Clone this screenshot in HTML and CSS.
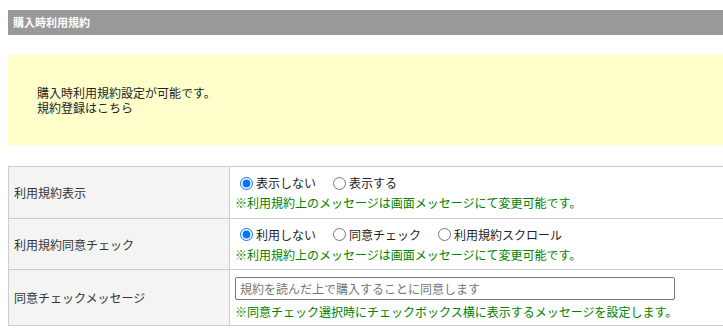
FILE: index.html
```html
<!DOCTYPE html>
<html lang="ja">
<head>
  <meta charset="UTF-8" />
  <title>購入時利用規約</title>
  <link rel="stylesheet" href="styles.css">
</head>
<body>
  <div class="page">
    <h2 class="section-title">購入時利用規約</h2>

    <div class="notice">
      <p>購入時利用規約設定が可能です。<br>規約登録はこちら</p>
    </div>

    <table class="form-table">
      <tr class="row-1">
        <th>利用規約表示</th>
        <td>
          <div class="choices">
            <label><input type="radio" name="disp" checked>表示しない</label>
            <label><input type="radio" name="disp">表示する</label>
          </div>
          <div class="note">※利用規約上のメッセージは画面メッセージにて変更可能です。</div>
        </td>
      </tr>
      <tr class="row-2">
        <th>利用規約同意チェック</th>
        <td>
          <div class="choices">
            <label><input type="radio" name="check" checked>利用しない</label>
            <label><input type="radio" name="check">同意チェック</label>
            <label><input type="radio" name="check">利用規約スクロール</label>
          </div>
          <div class="note">※利用規約上のメッセージは画面メッセージにて変更可能です。</div>
        </td>
      </tr>
      <tr class="row-3">
        <th>同意チェックメッセージ</th>
        <td>
          <input type="text" class="text-input" placeholder="規約を読んだ上で購入することに同意します">
          <div class="note">※同意チェック選択時にチェックボックス横に表示するメッセージを設定します。</div>
        </td>
      </tr>
    </table>
  </div>
</body>
</html>
```

FILE: styles.css
```css
html {
  overflow: hidden;
}
body {
  margin: 10px 0 0 8px;
  font-family: "Noto Sans CJK JP", "Noto Sans", sans-serif;
  font-size: 12px;
  color: #333;
}
.page {
  width: 780px;
}
.section-title {
  margin: 0;
  height: 25px;
  line-height: 25px;
  padding-left: 5px;
  background: #999;
  color: #fff;
  font-size: 11px;
  font-weight: bold;
}
.notice {
  margin-top: 20px;
  height: 90px;
  padding-left: 29px;
  background: #ffffcc;
  display: flex;
  align-items: center;
}
.notice p {
  margin: 0;
  line-height: 15px;
  color: #222;
}
.form-table {
  margin-top: 21px;
  width: 100%;
  border-collapse: collapse;
}
.form-table th,
.form-table td {
  border: 1px solid #ccc;
  padding: 0;
}
.form-table th {
  width: 215px;
  padding-left: 5px;
  background: #f3f4f3;
  font-weight: normal;
  text-align: left;
  color: #333;
}
.form-table td {
  padding-left: 5px;
}
.row-1 { height: 52px; }
.row-2 { height: 51px; }
.row-3 { height: 56px; }
.choices {
  display: flex;
  gap: 12px;
  line-height: 18px;
}
.choices label {
  display: flex;
  align-items: center;
  color: #222;
}
.choices input {
  margin: 0 3px 0 5px;
  width: 13px;
  height: 13px;
}
.note {
  margin-top: 3px;
  color: #008000;
  line-height: 16px;
}
.text-input {
  box-sizing: border-box;
  width: 440px;
  height: 23px;
  margin: 1px 0 0 0;
  padding: 0 4px;
  border: 1px solid #767676;
  border-radius: 2px;
  font-family: inherit;
  font-size: 12px;
}
.text-input::placeholder {
  color: #757575;
}
.row-3 .note {
  margin-top: 4px;
}
```
